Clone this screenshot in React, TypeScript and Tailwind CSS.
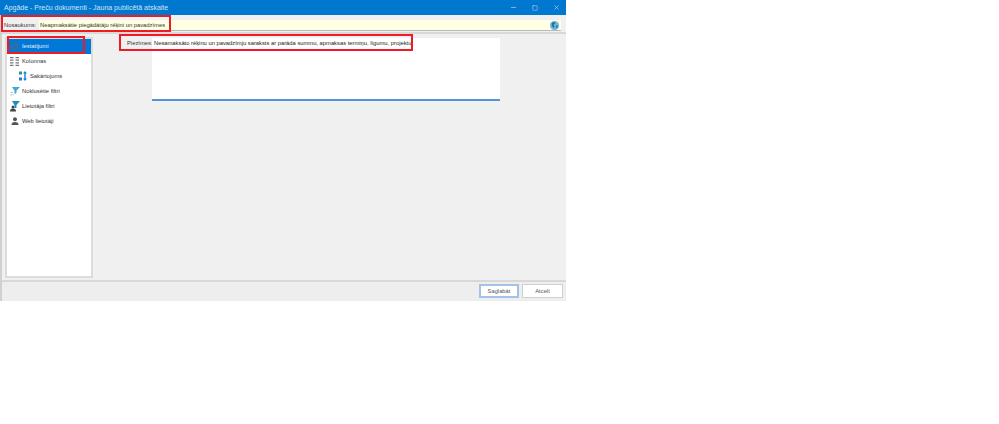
import { Minus, Square, X } from 'lucide-react';

const FONT = { fontFamily: '"Liberation Sans", Arial, sans-serif' };

function RedBox({ className }: { className: string }) {
  return <div className={`absolute border-2 border-[#ed1c24] ${className}`} />;
}

function GearIcon() {
  return (
    <svg width="9" height="9" viewBox="0 0 10 10" fill="none">
      <circle cx="5" cy="5" r="3.4" stroke="#4a6a8a" strokeWidth="1.6" />
      <circle cx="5" cy="5" r="1" fill="#4a6a8a" />
    </svg>
  );
}

function ColumnsIcon() {
  return (
    <svg width="9" height="9" viewBox="0 0 9 9">
      <path d="M0 0h3.500v1.200H0zM5.500 0H9v1.200H5.500zM0 2.600h3.500v1.200H0zM5.500 2.600H9v1.200H5.500zM0 5.200h3.500v1.200H0zM5.500 5.200H9v1.200H5.500zM0 7.800h3.500V9H0zM5.500 7.800H9V9H5.500z" fill="#777" />
    </svg>
  );
}

function SortIcon() {
  return (
    <svg width="8" height="10" viewBox="0 0 8 10">
      <rect x="0" y="0.500" width="3" height="3" fill="#1f9a8c" />
      <rect x="0" y="6.500" width="3" height="3" fill="#1c7fd1" />
      <path d="M6 0l2 2.500H6.700v5H8L6 10 4 7.500h1.300v-5H4z" fill="#1c7fd1" />
    </svg>
  );
}

function FilterIcon() {
  return (
    <svg width="10" height="10" viewBox="0 0 10 10">
      <path d="M2 1h8L6.500 4.500V7L4.500 8V4.500z" fill="#3fa9d6" />
      <path d="M0.500 6h2.500v0.800H0.500zM0 8.500h3.500v0.800H0z" fill="#9ab4c0" />
    </svg>
  );
}

function UserFilterIcon() {
  return (
    <svg width="10" height="11" viewBox="0 0 10 11">
      <path d="M2 0h8L6.500 4V7H4.500V4z" fill="#1c8fb8" />
      <path d="M0 10.500c0-2 1-3 3-3s3 1 3 3z" fill="#444" />
      <circle cx="3" cy="6" r="1.500" fill="#444" />
    </svg>
  );
}

function WebUserIcon() {
  return (
    <svg width="8" height="8" viewBox="0 0 9 9">
      <circle cx="4.500" cy="2.500" r="2.200" fill="#555" />
      <path d="M0.500 9c0-2.500 1.500-3.500 4-3.500s4 1 4 3.500z" fill="#555" />
    </svg>
  );
}

function GlobeIcon() {
  return (
    <svg width="9" height="9" viewBox="0 0 10 10">
      <circle cx="5" cy="5" r="5" fill="#6db6e3" />
      <path d="M2 2l3-1 1 2-2 1 1 2-1 2-2-3zM7 5l2 0-1 3-1.500-1z" fill="#2a6f9c" />
    </svg>
  );
}

const NAV = [
  { label: 'Iestatījumi', icon: <GearIcon />, active: true },
  { label: 'Kolonnas', icon: <ColumnsIcon /> },
  { label: 'Sakārtojums', icon: <SortIcon />, nested: true },
  { label: 'Noklusētie filtri', icon: <FilterIcon /> },
  { label: 'Lietotāja filtri', icon: <UserFilterIcon /> },
  { label: 'Web lietotāji', icon: <WebUserIcon /> },
];

export default function App() {
  return (
    <div className="relative w-[999px] h-[424px] bg-white overflow-hidden text-[5.800px] leading-[10px] text-[#333]" style={FONT}>
      <div className="flex flex-col w-[566px] h-[301px] bg-[#f0f0f0] border-l-2 border-[#d0d0d0]">
        {/* title bar */}
        <div className="-ml-[2px] flex items-center justify-between h-[15px] pl-1 bg-[#0078d0] text-[#cfe4f5] text-[7px]">
          <span>Apgāde - Preču dokumenti - Jauna publicētā atskaite</span>
          <div className="flex items-center gap-[15px] pr-[6px]">
            <Minus size={7} />
            <Square size={6} />
            <X size={7} />
          </div>
        </div>

        {/* name row */}
        <div className="flex items-center h-[11px] mt-[5px] pl-[2px] pr-[5px]">
          <span className="w-[35px] shrink-0 pb-[1px]">Nosaukums:</span>
          <div className="flex flex-1 items-center justify-between h-full pl-[1px] pr-[2px] bg-[#ffffe3] border-b border-[#b8b8b8]">
            <span className="pb-[1px]">Neapmaksātie piegādātāju rēķini un pavadzīmes</span>
            <GlobeIcon />
          </div>
        </div>
        <div className="h-[2px] mt-[1px] bg-[#d8d8d8]" />

        {/* body */}
        <div className="flex flex-1 min-h-0 pt-[3px] border-b-2 border-[#d8d8d8]">
          <div className="w-[88px] h-[241px] ml-[3px] shrink-0 bg-white border-2 border-[#dcdcdc]">
            {NAV.map((item) => (
              <div
                key={item.label}
                className={`flex items-center h-[15px] pb-[1px] ${item.nested ? 'pl-[10px]' : 'pl-[2px]'} ${item.active ? 'bg-[#0078d7] text-[#e6f2fb]' : ''}`}
              >
                <span className="flex items-center justify-center w-[11px] shrink-0">{item.icon}</span>
                <span className="ml-[2px]">{item.label}</span>
              </div>
            ))}
          </div>

          <div className="flex flex-1 items-start pt-[1px] pl-[34px]">
            <span className="w-[25px] shrink-0">Piezīmes:</span>
            <div className="w-[348px] h-[63px] pl-[2px] bg-white border-b-2 border-[#4f96d6] text-[#222]">
              Nesamaksāto rēķinu un pavadzīmju saraksts ar parāda summu, apmaksas termiņu, līgumu, projektu|
            </div>
          </div>
        </div>

        {/* footer */}
        <div className="flex justify-end items-start gap-[3px] h-[19px] pt-[2px] pr-[3px] bg-[#eeeeee]">
          <button className="w-[40px] h-[14px] bg-white border-2 border-[#a3c2e6] text-[#555]">Saglabāt</button>
          <button className="w-[41px] h-[14px] bg-white border border-[#cfcfcf] text-[#555]">Atcelt</button>
        </div>
      </div>

      {/* annotation rectangles */}
      <RedBox className="left-[1px] top-[15px] w-[170px] h-[17px]" />
      <RedBox className="left-[7px] top-[36px] w-[78px] h-[18px]" />
      <RedBox className="left-[119px] top-[34px] w-[294px] h-[17px]" />
    </div>
  );
}
